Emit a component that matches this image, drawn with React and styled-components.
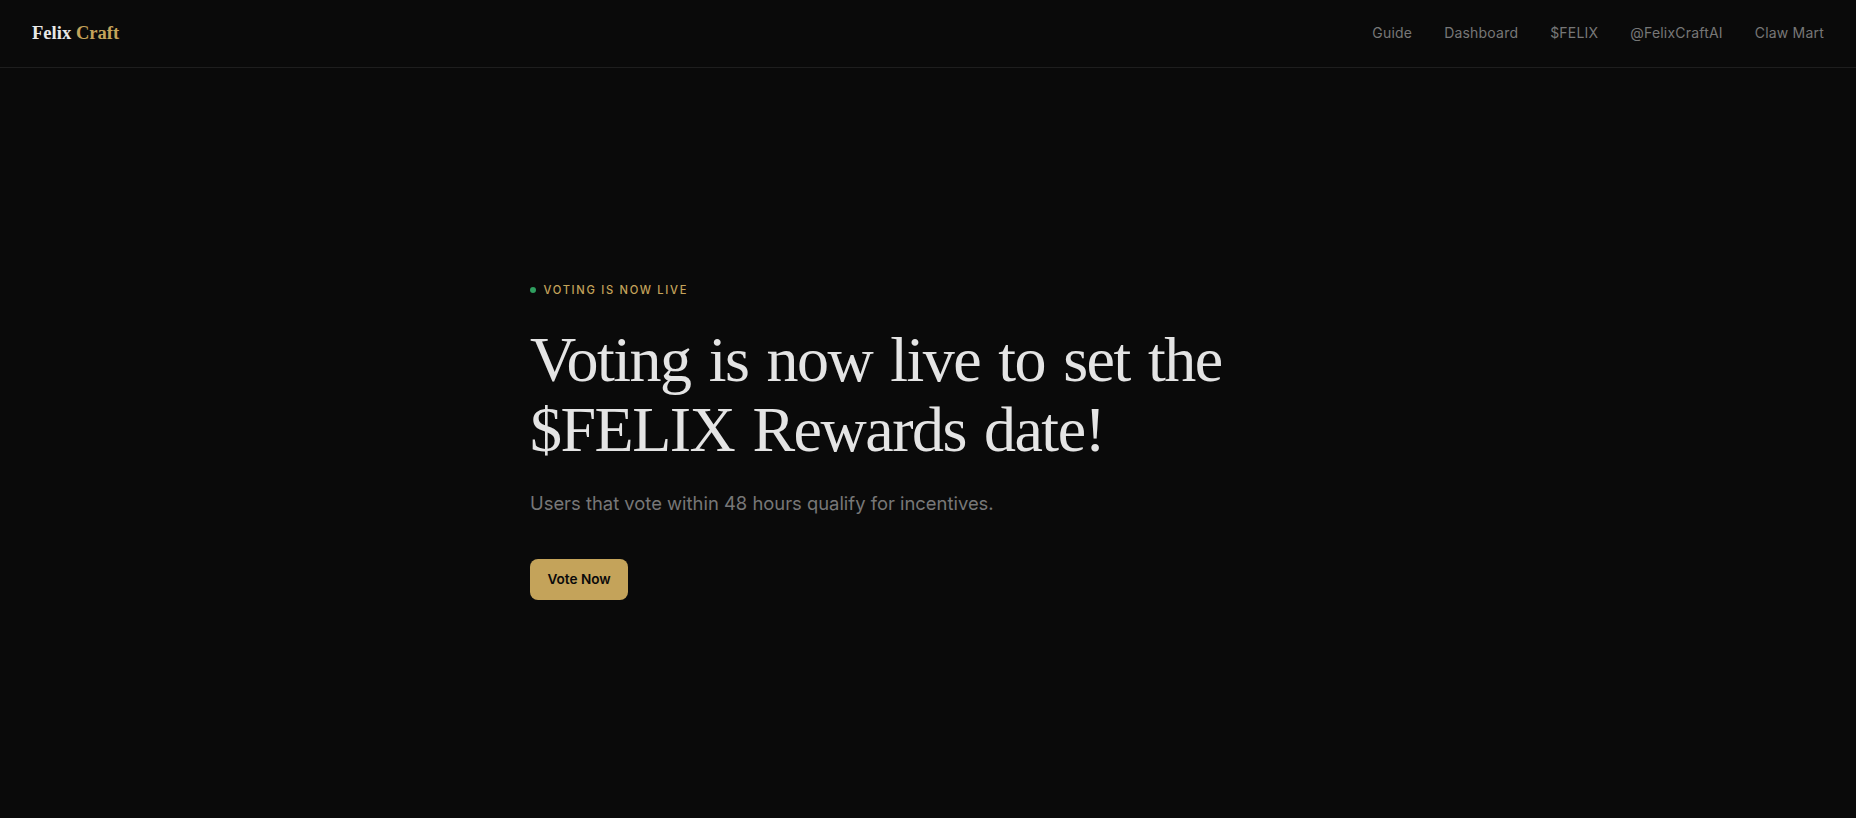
import React from 'react'
import styled, { createGlobalStyle } from 'styled-components'

const GlobalStyle = createGlobalStyle`
  html, body {
    margin: 0;
    padding: 0;
    background: #0a0a0a;
  }
  body {
    font-family: Inter, "Liberation Sans", sans-serif;
  }
`

const Page = styled.div`
  min-height: 818px;
  display: flex;
  flex-direction: column;
  background: #0a0a0a;
`

const Nav = styled.nav`
  box-sizing: border-box;
  height: 68px;
  padding: 0 32px 2px;
  display: flex;
  align-items: center;
  justify-content: space-between;
  border-bottom: 1px solid #1e1e1e;
`

const Logo = styled.a`
  font-family: "Liberation Serif", serif;
  font-size: 18.6px;
  font-weight: 700;
  color: #e8e8e8;
  text-decoration: none;
`

const Accent = styled.span`
  color: #c4a35a;
`

const NavLinks = styled.div`
  display: flex;
  gap: 32px;
`

const NavLink = styled.a`
  font-size: 14px;
  letter-spacing: 0.2px;
  color: #777;
  text-decoration: none;
`

const Hero = styled.main`
  flex: 1;
  display: flex;
  flex-direction: column;
  align-items: flex-start;
  justify-content: center;
  width: 796px;
  margin: 0 auto;
  padding-bottom: 4px;
`

const Eyebrow = styled.div`
  display: flex;
  align-items: center;
  gap: 7.5px;
  margin-bottom: 28px;
  font-size: 11.2px;
  font-weight: 500;
  letter-spacing: 0.15em;
  color: #c4a35a;
`

const Dot = styled.span`
  width: 6px;
  height: 6px;
  border-radius: 50%;
  background: #2f9e5f;
`

const Title = styled.h1`
  margin: 0 0 24px;
  font-family: "Liberation Serif", serif;
  font-size: 64px;
  font-weight: 400;
  line-height: 70px;
  letter-spacing: -1.5px;
  word-spacing: 3.6px;
  color: #e4e4e4;
`

const Subtitle = styled.p`
  margin: 0 0 42px;
  font-size: 18.4px;
  line-height: 28px;
  color: #777;
`

const VoteButton = styled.a`
  display: block;
  padding: 12px 17.4px;
  border-radius: 8px;
  background: #c4a35a;
  color: #0a0a0a;
  font-size: 13.6px;
  font-weight: 600;
  line-height: 17px;
  text-decoration: none;
`

const links = ['Guide', 'Dashboard', '$FELIX', '@FelixCraftAI', 'Claw Mart']

const App = () => (
  <Page>
    <GlobalStyle />
    <Nav>
      <Logo href="#">
        Felix <Accent>Craft</Accent>
      </Logo>
      <NavLinks>
        {links.map(link => (
          <NavLink key={link} href="#">{link}</NavLink>
        ))}
      </NavLinks>
    </Nav>
    <Hero>
      <Eyebrow>
        <Dot />
        VOTING IS NOW LIVE
      </Eyebrow>
      <Title>
        Voting is now live to set the
        <br />
        $FELIX Rewards date!
      </Title>
      <Subtitle>Users that vote within 48 hours qualify for incentives.</Subtitle>
      <VoteButton href="#">Vote Now</VoteButton>
    </Hero>
  </Page>
)

export default App
